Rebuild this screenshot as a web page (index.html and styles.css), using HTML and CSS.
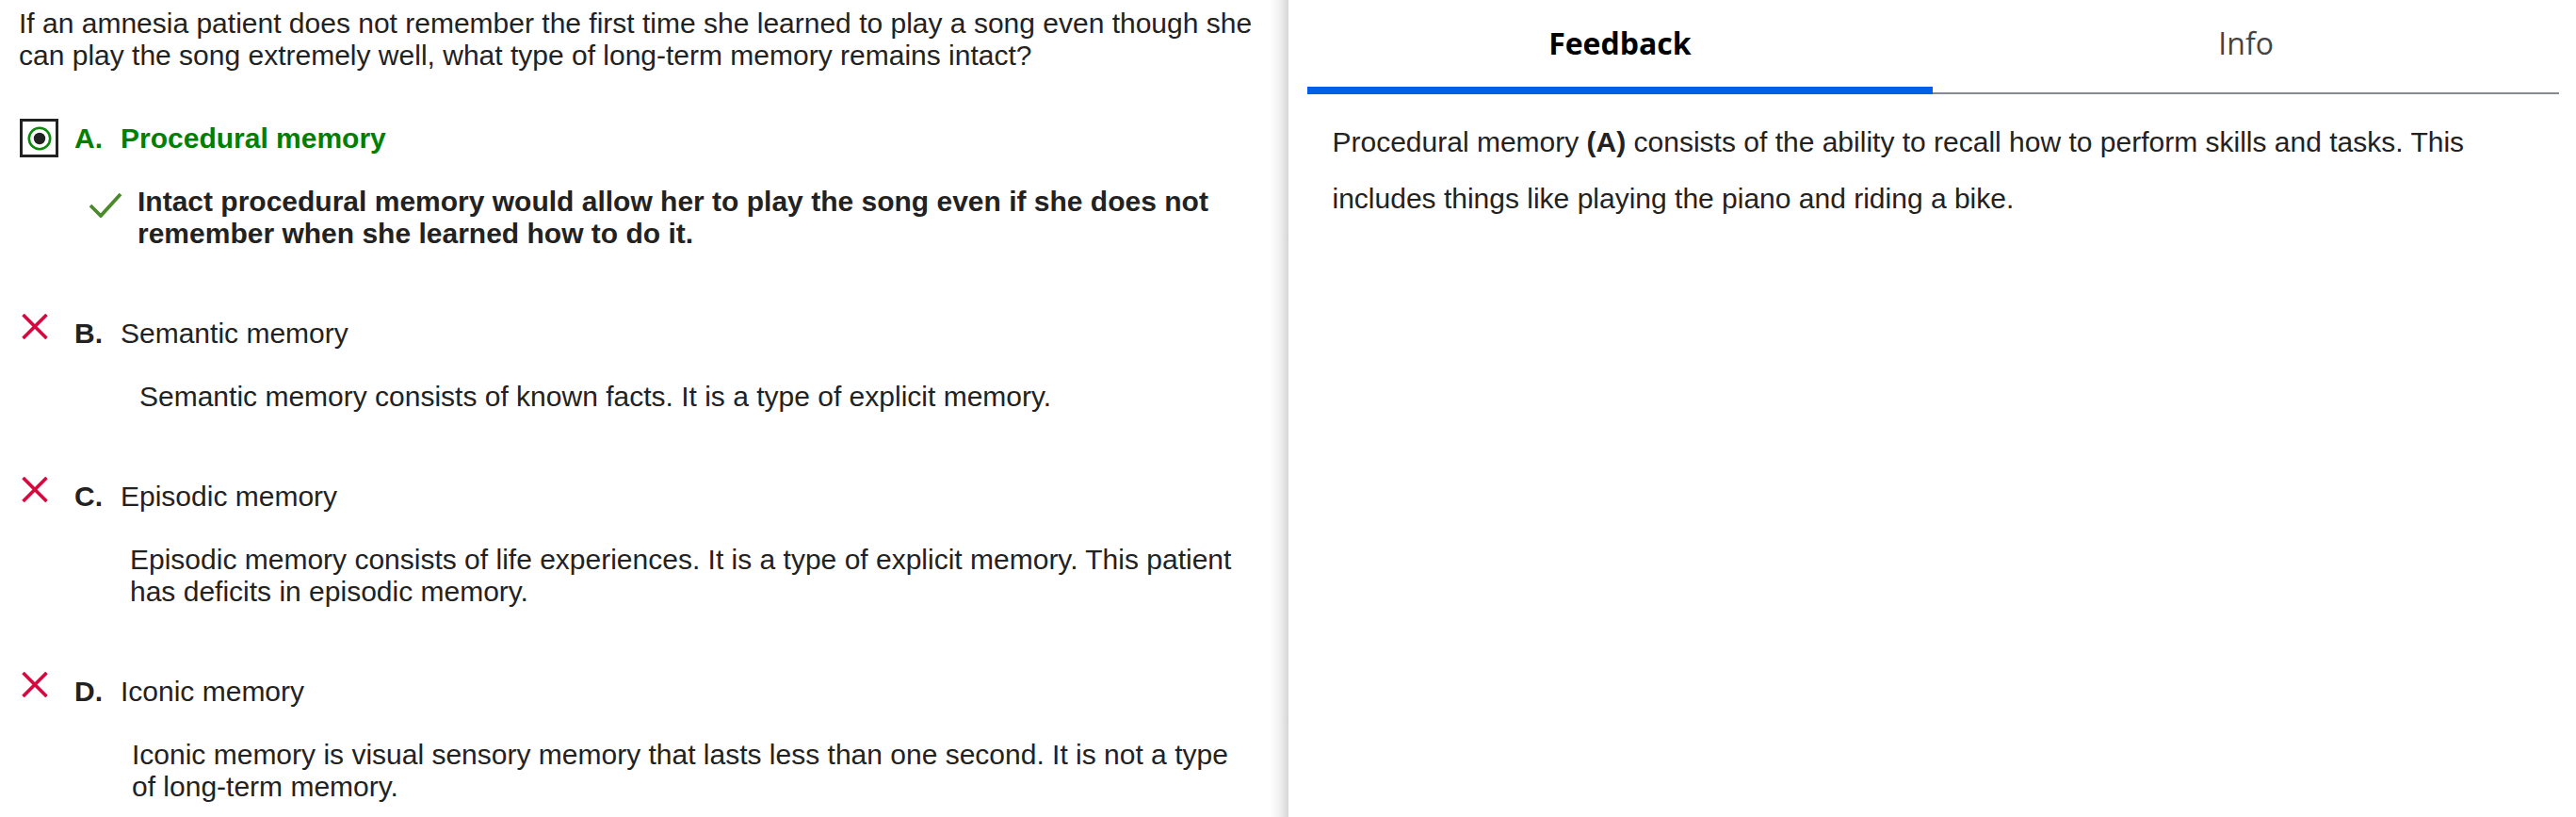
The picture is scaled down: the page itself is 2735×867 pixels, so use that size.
FILE: index.html
```html
<!DOCTYPE html>
<html lang="en">
<head>
<meta charset="utf-8">
<title>Question feedback</title>
<link rel="stylesheet" href="styles.css">
</head>
<body>
<div class="layout">
  <section class="question-panel">
    <p class="question">If an amnesia patient does not remember the first time she learned to play a song even though she can play the song extremely well, what type of long-term memory remains intact?</p>

    <div class="option option-first">
      <div class="opt-head">
        <span class="opt-icon radio-box">
          <svg width="26" height="26" viewBox="0 0 26 26"><circle cx="13" cy="13" r="11.2" fill="none" stroke="#0a8a0a" stroke-width="2.6"/><circle cx="13" cy="13" r="6.2" fill="#222"/></svg>
        </span>
        <span class="opt-text correct"><b class="opt-label">A.</b>Procedural memory</span>
      </div>
      <div class="fb fb-a">
        <svg class="check" width="36" height="27" viewBox="0 0 36 27"><path d="M2 14 L13 25 L34 2" fill="none" stroke="#4a8a2b" stroke-width="3.8"/></svg>
        <p class="fb-text strong">Intact procedural memory would allow her to play the song even if she does not remember when she learned how to do it.</p>
      </div>
    </div>

    <div class="option">
      <div class="opt-head">
        <span class="opt-icon"><svg class="xmark" width="28" height="27" viewBox="0 0 28 27"><path d="M1.5 1 L26.5 26 M26.5 1 L1.5 26" stroke="#d5093f" stroke-width="3.6"/></svg></span>
        <span class="opt-text"><b class="opt-label">B.</b>Semantic memory</span>
      </div>
      <div class="fb fb-b"><p class="fb-text">Semantic memory consists of known facts. It is a type of explicit memory.</p></div>
    </div>

    <div class="option">
      <div class="opt-head">
        <span class="opt-icon"><svg class="xmark" width="28" height="27" viewBox="0 0 28 27"><path d="M1.5 1 L26.5 26 M26.5 1 L1.5 26" stroke="#d5093f" stroke-width="3.6"/></svg></span>
        <span class="opt-text"><b class="opt-label">C.</b>Episodic memory</span>
      </div>
      <div class="fb fb-c"><p class="fb-text">Episodic memory consists of life experiences. It is a type of explicit memory. This patient has deficits in episodic memory.</p></div>
    </div>

    <div class="option">
      <div class="opt-head">
        <span class="opt-icon"><svg class="xmark" width="28" height="27" viewBox="0 0 28 27"><path d="M1.5 1 L26.5 26 M26.5 1 L1.5 26" stroke="#d5093f" stroke-width="3.6"/></svg></span>
        <span class="opt-text"><b class="opt-label">D.</b>Iconic memory</span>
      </div>
      <div class="fb fb-d"><p class="fb-text">Iconic memory is visual sensory memory that lasts less than one second. It is not a type of long-term memory.</p></div>
    </div>
  </section>

  <section class="side-panel">
    <div class="tabs">
      <div class="tab active">Feedback</div>
      <div class="tab">Info</div>
    </div>
    <p class="explanation">Procedural memory <b>(A)</b> consists of the ability to recall how to perform skills and tasks. This includes things like playing the piano and riding a bike.</p>
  </section>
</div>
</body>
</html>
```

FILE: styles.css
```css
html, body {
  margin: 0;
  padding: 0;
  background: #fff;
}

body {
  font-family: "Liberation Sans", Arial, sans-serif;
  font-size: 30px;
  line-height: 34px;
  color: #222;
  overflow: hidden;
}

.layout {
  display: grid;
  grid-template-columns: 1fr 1fr;
  height: 867px;
}

.question-panel {
  padding: 8px 34px 0 20px;
  background: linear-gradient(to right, #fff calc(100% - 20px), #f2f2f2 calc(100% - 10px), #d6d6d6 100%);
}

.question {
  margin: 0;
}

.option {
  margin-top: 68px;
}

.option-first {
  margin-top: 50px;
}

.opt-head {
  display: flex;
  align-items: flex-start;
  gap: 17px;
  padding-left: 1px;
  min-height: 41px;
}

.opt-icon {
  flex: none;
  width: 41px;
  height: 41px;
  box-sizing: border-box;
}

.opt-icon .xmark {
  display: block;
  margin-left: 2px;
}

.radio-box {
  border: 3px solid #222;
  display: flex;
  align-items: center;
  justify-content: center;
}

.radio-box svg {
  display: block;
}

.opt-text {
  margin-top: 4px;
}

.opt-label {
  display: inline-block;
  margin-right: 19px;
  font-weight: 700;
}

.opt-text.correct {
  color: #008000;
  font-weight: 700;
}

.fb {
  margin-top: 30px;
}

.fb-text {
  margin: 0;
}

.fb-text.strong {
  font-weight: 700;
}

.fb-a {
  display: flex;
  align-items: flex-start;
  gap: 16px;
  padding-left: 74px;
}

.fb-a .check {
  flex: none;
  display: block;
  margin-top: 7px;
}

.fb-b {
  padding-left: 128px;
}

.fb-c {
  padding-left: 118px;
}

.fb-d {
  padding-left: 120px;
}

.side-panel {
  padding: 0 18px 0 20px;
}

.tabs {
  display: grid;
  grid-template-columns: 1fr 1fr;
}

.tab {
  height: 100px;
  box-sizing: border-box;
  padding-top: 24px;
  text-align: center;
  font-family: "Open Sans", "Liberation Sans", sans-serif;
  font-size: 32px;
  line-height: 44px;
  color: #444;
  border-bottom: 2px solid #868b90;
}

.tab.active {
  color: #000;
  font-weight: 700;
  border-bottom: 8px solid #0060e6;
}

.explanation {
  margin: 21px 0 0;
  padding: 0 27px;
  line-height: 60px;
}

.explanation b {
  font-weight: 700;
}
```
